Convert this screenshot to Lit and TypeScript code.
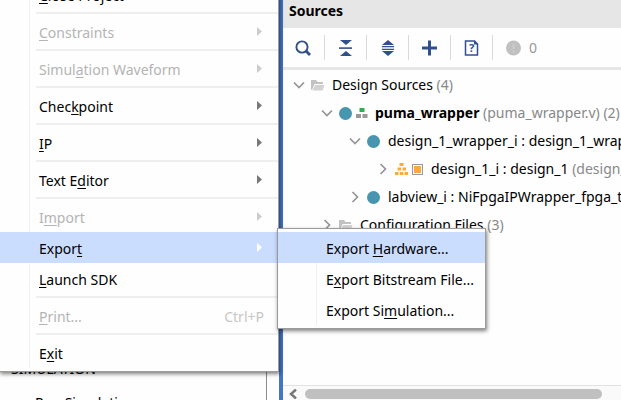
import { LitElement, html, css, svg, nothing, TemplateResult } from "lit";
import { customElement, property } from "lit/decorators.js";

interface MenuEntry {
  label?: string;
  key?: number;
  disabled?: boolean;
  submenu?: boolean;
  active?: boolean;
  shortcut?: string;
}

const SEPARATOR: MenuEntry = {};

const FILE_MENU: MenuEntry[] = [
  { label: "Close Project", key: 0 },
  SEPARATOR,
  { label: "Constraints", key: 0, disabled: true, submenu: true },
  SEPARATOR,
  { label: "Simulation Waveform", key: 5, disabled: true, submenu: true },
  SEPARATOR,
  { label: "Checkpoint", key: 4, submenu: true },
  SEPARATOR,
  { label: "IP", key: 0, submenu: true },
  SEPARATOR,
  { label: "Text Editor", key: 6, submenu: true },
  SEPARATOR,
  { label: "Import", key: 1, disabled: true, submenu: true },
  { label: "Export", key: 5, submenu: true, active: true },
  { label: "Launch SDK", key: 0 },
  SEPARATOR,
  { label: "Print...", key: 0, disabled: true, shortcut: "Ctrl+P" },
  SEPARATOR,
  { label: "Exit", key: 1 },
];

const EXPORT_MENU: MenuEntry[] = [
  { label: "Export Hardware...", key: 7, active: true },
  { label: "Export Bitstream File...", key: 1 },
  { label: "Export Simulation...", key: 9 },
];

const icons = {
  search: svg`<circle cx="7" cy="7" r="5.600" fill="none" stroke="currentColor" stroke-width="1.900"/><path d="M11 11l4 4" stroke="currentColor" stroke-width="2.800"/>`,
  collapse: svg`<path d="M3 0h12l-6 5zM3 16h12l-6-5z" fill="currentColor"/><path d="M2 7.300h13v1.600h-13z" fill="currentColor"/>`,
  expand: svg`<path d="M9 0l6 5h-12zM9 16l6-5h-12z" fill="currentColor"/><path d="M3 6h12v1.300h-12zM3 8.700h12v1.300h-12z" fill="currentColor"/>`,
  plus: svg`<path d="M8.500 0.500v15M1 8h15" stroke="currentColor" stroke-width="3"/>`,
  help: svg`<path d="M2.500 1h9l3 3v11h-12z" fill="none" stroke="currentColor" stroke-width="1.500"/><path d="M11 0.500l4 4h-4z" fill="currentColor"/><text x="8.500" y="12" text-anchor="middle" font-size="11" font-weight="700" fill="currentColor">?</text>`,
};

@customElement("menu-panel")
class MenuPanel extends LitElement {
  @property({ attribute: false }) entries: MenuEntry[] = [];
  @property() name = "";

  static styles = css`
    :host {
      display: block;
      box-sizing: border-box;
      background: #fefefe;
      border: 1px solid #9b9b9b;
      box-shadow: 1px 2px 4px rgba(0, 0, 0, 0.5);
      padding: 3px 0;
    }
    .list {
      display: flex;
      flex-direction: column;
      background: linear-gradient(#f0f0f0, #f0f0f0) var(--gutter, 29px) 0 / 1px 100% no-repeat;
    }
    .item {
      display: flex;
      align-items: center;
      height: 31px;
      padding: 2px 14px 0 var(--indent, 39px);
      border: 0;
      background: none;
      color: #000;
      font: inherit;
      text-align: left;
      white-space: pre;
    }
    .item.active {
      background: #cbddff;
    }
    .item:disabled {
      color: #b4b4b4;
    }
    .label {
      flex: 1;
    }
    .key {
      text-decoration: underline;
      text-underline-offset: 2px;
      text-decoration-thickness: 1px;
      text-decoration-skip-ink: none;
    }
    .shortcut {
      color: #c6c6c6;
    }
    .arrow {
      width: 5px;
      height: 9px;
      margin: 0 2px 3px 0;
      fill: #777;
    }
    .item:disabled .arrow {
      fill: #ccc;
    }
    .item.active .arrow {
      fill: #fff;
    }
    .separator {
      height: 2px;
      margin: 2px 0 2px 36px;
      background: #efefef;
    }
  `;

  private row(e: MenuEntry) {
    if (!e.label) return html`<div class="separator" role="separator"></div>`;
    const k = e.key ?? 0;
    return html`<button
      class="item ${e.active ? "active" : ""}"
      role="menuitem"
      ?disabled=${e.disabled}
      ><span class="label">${e.label.slice(0, k)}<span class="key">${e.label[k]}</span>${e.label.slice(k + 1)}</span
      >${e.shortcut ? html`<span class="shortcut">${e.shortcut}</span>` : nothing}${e.submenu
        ? html`<svg class="arrow" viewBox="0 0 5 9"><path d="M0 0l5 4.500l-5 4.500z" /></svg>`
        : nothing}</button>`;
  }

  render() {
    return html`<div class="list" role="menu" aria-label=${this.name}>${this.entries.map((e) => this.row(e))}</div>`;
  }
}

@customElement("source-row")
class SourceRow extends LitElement {
  @property({ type: Number }) level = 0;
  @property({ type: Boolean }) open = false;

  static styles = css`
    :host {
      display: flex;
      align-items: center;
      height: 28px;
      white-space: pre;
    }
    .toggle {
      flex: none;
      display: grid;
      place-items: center;
      width: 12px;
      height: 20px;
      margin: 0 6px 0 10px;
      padding: 0;
      border: 0;
      background: none;
    }
    .chevron {
      width: 12px;
      height: 12px;
      fill: none;
      stroke: #959595;
      stroke-width: 1.7;
    }
  `;

  render() {
    return html`<span style="width:${this.level * 28}px;flex:none"></span
      ><button class="toggle" aria-label="Toggle" aria-expanded=${this.open}>
        <svg class="chevron" viewBox="0 0 12 12">
          <path d=${this.open ? "M1 3.500l5 5l5-5" : "M3.500 1l5 5l-5 5"} />
        </svg></button
      ><slot></slot>`;
  }
}

@customElement("app-root")
class AppRoot extends LitElement {
  static styles = css`
    :host {
      display: flex;
      position: relative;
      height: 100vh;
      overflow: hidden;
      background: #fefefe;
      color: #000;
      font: 14px/20px "Noto Sans", "Open Sans", sans-serif;
    }
    .navigator {
      flex: none;
      box-sizing: border-box;
      width: 267px;
      margin-right: 12px;
      border-right: 1px solid #8c8c8c;
      display: flex;
      flex-direction: column;
      justify-content: flex-end;
    }
    .section {
      padding-left: 11px;
      margin-bottom: 14px;
    }
    .step {
      height: 7px;
      padding-left: 35px;
      color: inherit;
      text-decoration: none;
    }
    .splitter {
      flex: none;
      width: 4px;
      background: #4475c4;
    }
    .sources {
      flex: 1;
      min-width: 0;
      display: flex;
      flex-direction: column;
    }
    .title {
      margin: 0;
      height: 28px;
      padding-left: 6px;
      background: #e6e6e6;
      font-size: 14px;
      line-height: 22px;
      font-weight: 700;
    }
    .toolbar {
      display: flex;
      align-items: center;
      height: 39px;
      border-bottom: 3px solid #e6e6e6;
    }
    .tool {
      display: grid;
      place-items: center;
      width: 42px;
      height: 25px;
      padding: 0;
      border: 0;
      border-right: 1px solid #dadada;
      background: none;
      color: #30508c;
    }
    .glyph {
      width: 17px;
      height: 16px;
      font-family: "Noto Sans", sans-serif;
    }
    .status {
      display: flex;
      align-items: center;
      gap: 7px;
      padding-left: 12px;
      color: #999;
    }
    .tree {
      flex: 1;
      min-height: 0;
      overflow: hidden;
      padding-top: 1px;
    }
    .folder {
      flex: none;
      width: 14px;
      height: 12px;
      margin-right: 7px;
    }
    .dot {
      flex: none;
      width: 13px;
      height: 13px;
      border-radius: 50%;
      background: #4795ae;
      margin-right: 8px;
    }
    .dot.tight {
      margin-right: 4px;
    }
    .blocks {
      flex: none;
      width: 12px;
      height: 10px;
      margin-right: 7px;
    }
    .hierarchy {
      flex: none;
      width: 13px;
      height: 12px;
      margin-right: 4px;
    }
    .design {
      flex: none;
      box-sizing: border-box;
      width: 11px;
      height: 11px;
      border: 1px solid #999;
      padding: 1px;
      background: #ffa93c content-box;
      margin-right: 8px;
    }
    .note {
      color: #888;
    }
    .scrollbar {
      display: flex;
      align-items: center;
      gap: 8px;
      height: 13px;
      padding: 1px 19px 0 6px;
      border-top: 1px solid #e2e2e2;
      background: #fafafa;
    }
    .scroll-left {
      width: 8px;
      height: 10px;
      padding: 0;
      border: 0;
      background: none;
      display: grid;
    }
    .thumb {
      flex: 1;
      height: 10px;
      border-radius: 5px;
      background: #c0c0c0;
    }
    .file-menu {
      position: absolute;
      left: -1px;
      top: -25px;
      width: 280px;
    }
    .export-menu {
      position: absolute;
      left: 277px;
      top: 228px;
      width: 209px;
      --gutter: 38px;
      --indent: 48px;
    }
  `;

  private tool(label: string, glyph: TemplateResult<2>) {
    return html`<button class="tool" aria-label=${label} title=${label}>
      <svg class="glyph" viewBox="0 0 17 16">${glyph}</svg>
    </button>`;
  }

  private folder() {
    return html`<svg class="folder" viewBox="0 0 14 12">
      <path d="M0 11V1h5l1.500 2H12v2H3.500L1.500 10z" fill="#c2c2c2" />
      <path d="M4 6h9.500l-2 5.500H1.500z" fill="#d2d2d2" />
    </svg>`;
  }

  render() {
    return html`
      <nav class="navigator" aria-label="Flow Navigator">
        <div class="section">SIMULATION</div>
        <a class="step" href="#run">Run Simulation</a>
      </nav>
      <div class="splitter"></div>
      <section class="sources">
        <h2 class="title">Sources</h2>
        <div class="toolbar" role="toolbar">
          ${this.tool("Search", icons.search)} ${this.tool("Collapse all", icons.collapse)}
          ${this.tool("Expand all", icons.expand)} ${this.tool("Add sources", icons.plus)}
          ${this.tool("Help", icons.help)}
          <span class="status">
            <svg class="glyph" viewBox="0 0 17 16">
              <circle cx="8.500" cy="8" r="7.500" fill="#c0c0c0" />
              <path d="M8.500 4v5M8.500 10.500v2" stroke="#d0d0d0" stroke-width="1.500" />
            </svg>
            <span>0</span>
          </span>
        </div>
        <div class="tree" role="tree">
          <source-row role="treeitem" open>${this.folder()}<span>Design Sources <span class="note">(4)</span></span></source-row>
          <source-row role="treeitem" level="1" open
            ><span class="dot tight"></span
            ><svg class="blocks" viewBox="0 0 12 10">
              <path d="M3.500 0h5v4h-5z" fill="#2eae52" />
              <path d="M0 6h5v4H0zM6.500 6h5v4h-5z" fill="#999" /></svg
            ><span><b>puma_wrapper</b> <span class="note">(puma_wrapper.v) (2)</span></span></source-row
          >
          <source-row role="treeitem" level="2" open
            ><span class="dot"></span><span>design_1_wrapper_i : design_1_wrapper</span></source-row
          >
          <source-row role="treeitem" level="3"
            ><svg class="hierarchy" viewBox="0 0 13 12">
              <path
                d="M4.500 0h4v3h-4zM2.500 4.500h3.500v3h-3.500zM7.500 4.500h3.500v3h-3.500zM0 9h3.500v3H0zM4.800 9h3.500v3h-3.500zM9.500 9h3.500v3h-3.500z"
                fill="#ffa93c"
              /></svg
            ><span class="design"></span><span>design_1_i : design_1 <span class="note">(design_1.bd)</span></span></source-row
          >
          <source-row role="treeitem" level="2"
            ><span class="dot"></span><span>labview_i : NiFpgaIPWrapper_fpga_top</span></source-row
          >
          <source-row role="treeitem" level="1"
            >${this.folder()}<span>Configuration Files <span class="note">(3)</span></span></source-row
          >
        </div>
        <div class="scrollbar">
          <button class="scroll-left" aria-label="Scroll left">
            <svg viewBox="0 0 8 10"><path d="M7 0.500L2 5l5 4.500" fill="none" stroke="#777" stroke-width="2.500" /></svg>
          </button>
          <div class="thumb"></div>
        </div>
      </section>
      <menu-panel class="file-menu" name="File" .entries=${FILE_MENU}></menu-panel>
      <menu-panel class="export-menu" name="Export" .entries=${EXPORT_MENU}></menu-panel>
    `;
  }
}
